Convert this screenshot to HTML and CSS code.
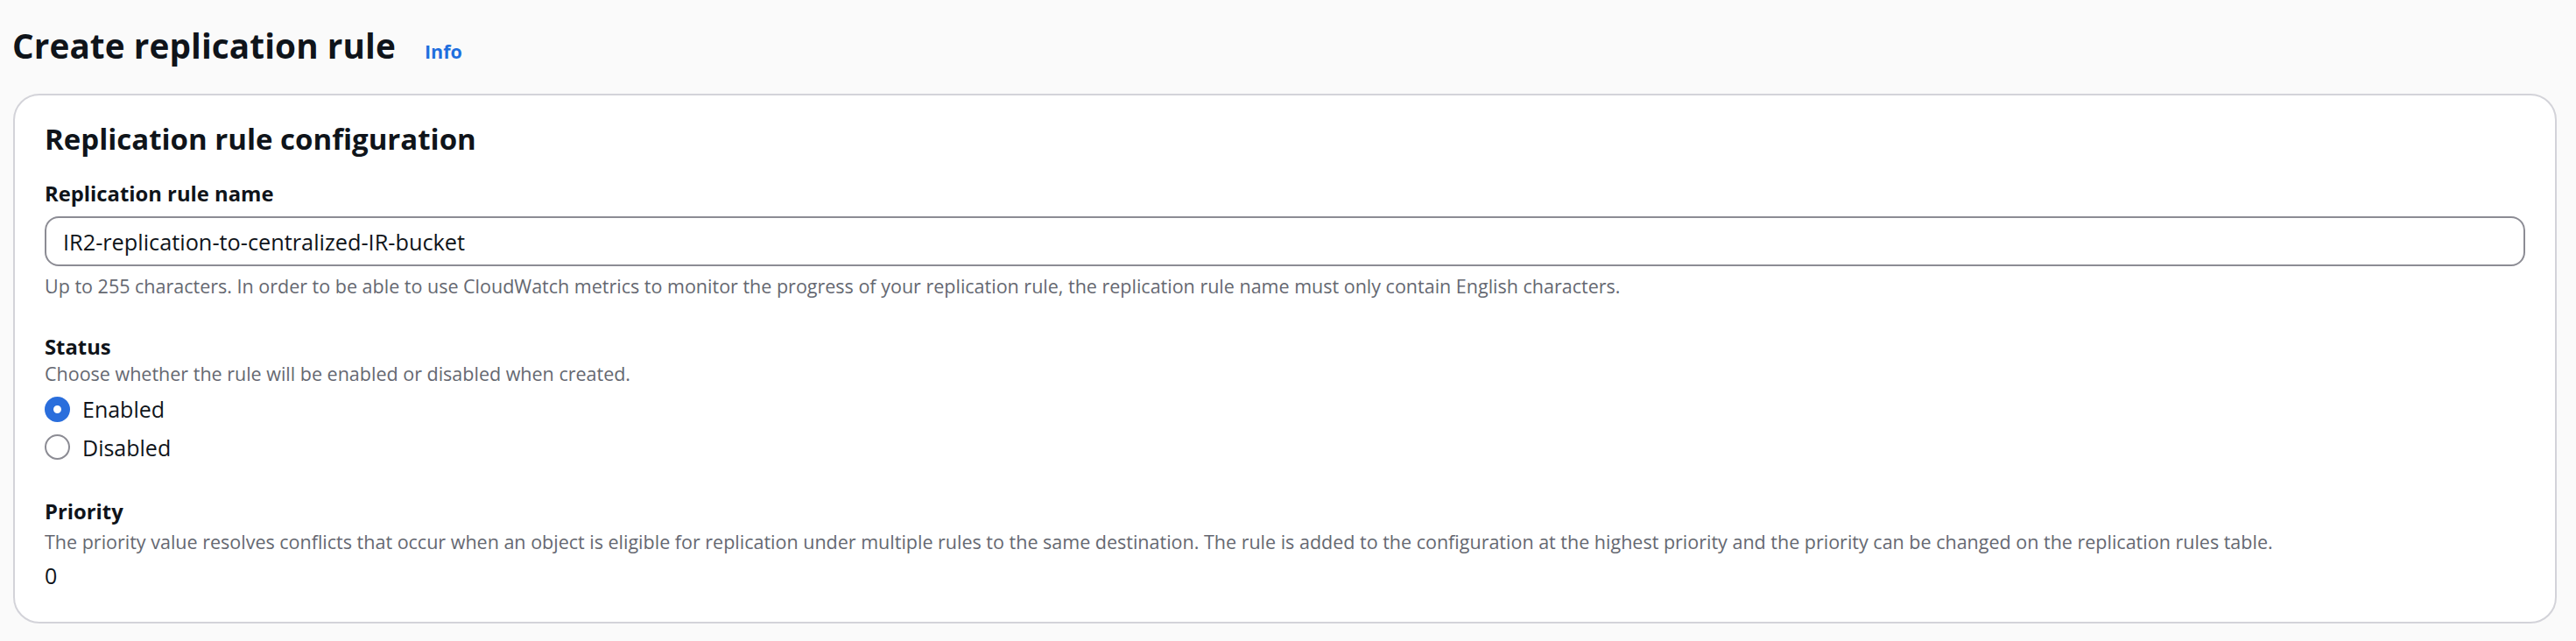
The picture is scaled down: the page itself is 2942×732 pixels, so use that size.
FILE: index.html
```html
<!DOCTYPE html>
<html lang="en">
<head>
<meta charset="utf-8">
<title>Create replication rule</title>
<link rel="stylesheet" href="styles.css">
</head>
<body>
<div class="page">
  <header class="page-header">
    <h1 class="page-title">Create replication rule</h1>
    <a class="info-link" href="#">Info</a>
  </header>

  <section class="card">
    <h2 class="card-title">Replication rule configuration</h2>

    <div class="field">
      <label class="field-label" for="rule-name">Replication rule name</label>
      <input class="text-input" id="rule-name" type="text" value="IR2-replication-to-centralized-IR-bucket" readonly>
      <p class="hint hint-after-input">Up to 255 characters. In order to be able to use CloudWatch metrics to monitor the progress of your replication rule, the replication rule name must only contain English characters.</p>
    </div>

    <div class="field field-status">
      <div class="field-label">Status</div>
      <p class="hint">Choose whether the rule will be enabled or disabled when created.</p>
      <div class="radio-group">
        <div class="radio-row">
          <span class="radio radio-checked"></span>
          <span class="radio-label">Enabled</span>
        </div>
        <div class="radio-row">
          <span class="radio"></span>
          <span class="radio-label">Disabled</span>
        </div>
      </div>
    </div>

    <div class="field field-priority">
      <div class="field-label">Priority</div>
      <p class="hint hint-priority">The priority value resolves conflicts that occur when an object is eligible for replication under multiple rules to the same destination. The rule is added to the configuration at the highest priority and the priority can be changed on the replication rules table.</p>
      <div class="value">0</div>
    </div>
  </section>
</div>
</body>
</html>
```
FILE: styles.css
```css
html, body {
  margin: 0;
  padding: 0;
  background: #fafafa;
}

body {
  font-family: "Open Sans", "Noto Sans", sans-serif;
  color: #0f141a;
}

.page {
  padding: 27px 22px 0 14px;
  height: 732px;
  box-sizing: border-box;
}

.page-header {
  display: flex;
  align-items: baseline;
  gap: 33px;
  height: 50px;
}

.page-title {
  margin: 0;
  font-size: 38.7px;
  line-height: 50px;
  font-weight: 700;
  color: #0f141a;
  letter-spacing: 0.1px;
}

.info-link {
  font-size: 21.5px;
  font-weight: 700;
  color: #1f6fde;
  text-decoration: none;
}

.card {
  margin-top: 30px;
  margin-left: 1px;
  background: #ffffff;
  border: 2px solid #d3d3d9;
  border-radius: 30px;
  padding: 29px 34px 35px 34px;
}

.card-title {
  margin: 0;
  font-size: 33px;
  line-height: 42px;
  font-weight: 700;
  color: #0f141a;
}

.field {
  display: flex;
  flex-direction: column;
}

.card-title + .field {
  margin-top: 25px;
}

.field-label {
  font-size: 23.8px;
  line-height: 32px;
  font-weight: 700;
  color: #0f141a;
}

.text-input {
  margin-top: 10px;
  height: 57px;
  box-sizing: border-box;
  border: 2px solid #8c8c94;
  border-radius: 16px;
  padding: 0 19px;
  font-family: "Open Sans", "Noto Sans", sans-serif;
  font-size: 25.3px;
  line-height: 53px;
  color: #0f141a;
  background: #ffffff;
  outline: none;
  width: 100%;
}

.hint {
  margin: 0;
  font-size: 21.5px;
  line-height: 30px;
  color: #656871;
  white-space: nowrap;
}

.hint-after-input {
  margin-top: 8px;
}

.field-status {
  margin-top: 38px;
}

.radio-group {
  display: flex;
  flex-direction: column;
  gap: 7.5px;
  margin-top: 7px;
}

.radio-row {
  display: flex;
  align-items: center;
  height: 36px;
}

.radio {
  width: 29px;
  height: 29px;
  box-sizing: border-box;
  border-radius: 50%;
  border: 2px solid #8c8c94;
  background: #ffffff;
  flex: none;
}

.radio-checked {
  border: 10px solid #2a6edc;
}

.radio-label {
  margin-left: 14px;
  font-size: 25px;
  line-height: 36px;
  color: #0f141a;
}

.field-priority {
  margin-top: 39.5px;
}

.hint-priority {
  margin-top: 3.5px;
}

.value {
  margin-top: 5.5px;
  font-size: 25px;
  line-height: 36px;
  color: #0f141a;
}
```
